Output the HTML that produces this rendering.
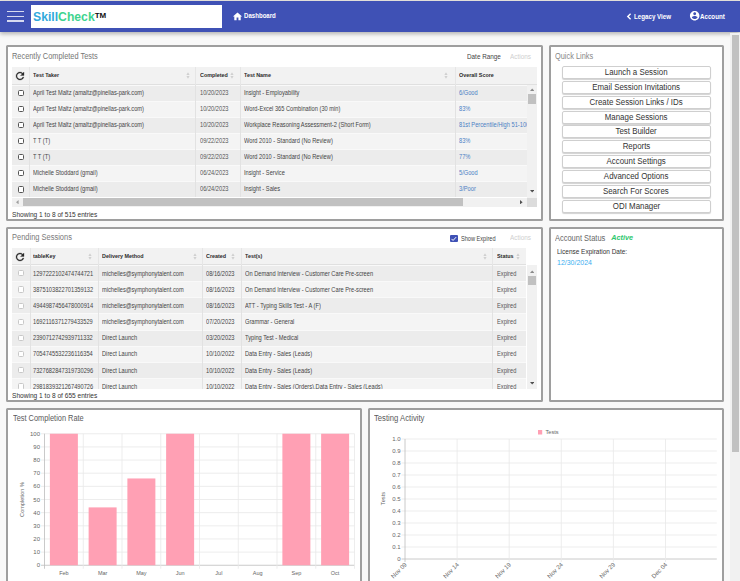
<!DOCTYPE html>
<html><head><meta charset="utf-8"><title>SkillCheck Dashboard</title>
<style>
*{box-sizing:border-box;margin:0;padding:0}
html,body{width:740px;height:581px;overflow:hidden;background:#f8f8f8;font-family:"Liberation Sans", sans-serif;}
.abs{position:absolute}
.t{position:absolute;white-space:nowrap;line-height:1;transform-origin:0 50%}
.panel{position:absolute;background:#fff;border:2px solid #9e9e9e;border-radius:1.5px}
.ql{position:absolute;left:561.5px;width:149.5px;height:13px;border:1px solid #cfcfcf;border-radius:2px;background:#fff;box-shadow:0 1px 1px rgba(0,0,0,.18);font-size:8.85px;color:#333;text-align:center;line-height:11px;white-space:nowrap}
</style></head><body>

<div class="abs" style="left:0;top:0;width:740px;height:1px;background:#e9e6e0"></div>
<div class="abs" style="left:0;top:1px;width:740px;height:30.5px;background:#3f51b5;box-shadow:0 2px 4px rgba(0,0,0,.28)"></div>
<div class="abs" style="left:7px;top:10.8px;width:17px;height:1.3px;background:#d6daf0"></div>
<div class="abs" style="left:7px;top:15.6px;width:17px;height:1.3px;background:#d6daf0"></div>
<div class="abs" style="left:7px;top:20.4px;width:17px;height:1.3px;background:#d6daf0"></div>
<div class="abs" style="left:30.5px;top:4.5px;width:191.5px;height:23.5px;background:#fff"></div>
<div class="t" style="left:33px;top:10.8px;font-size:12.2px;font-weight:bold;letter-spacing:0px"><span style="color:#31a9dc">Skill</span><span style="color:#3fd48f">Check</span><span style="color:#111;font-size:8px;position:relative;top:-3px">TM</span></div>
<svg class="abs" style="left:232.1px;top:10.5px" width="11" height="11" viewBox="0 0 24 24"><path fill="#fff" d="M10 20v-6h4v6h5v-8h3L12 3 2 12h3v8z"/></svg>
<div class="t" style="left:243.5px;top:13.23px;font-size:6.83px;transform:scaleX(0.8929);font-weight:bold;color:#fff">Dashboard</div>
<svg class="abs" style="left:626px;top:12.5px" width="6" height="7" viewBox="0 0 6 7"><path d="M4.6 0.8 L1.8 3.5 L4.6 6.2" stroke="#fff" stroke-width="1.4" fill="none"/></svg>
<div class="t" style="left:634.3px;top:13.83px;font-size:6.94px;transform:scaleX(0.8929);font-weight:bold;color:#fff">Legacy View</div>
<svg class="abs" style="left:689.3px;top:10.4px" width="11.4" height="11.4" viewBox="0 0 24 24"><path fill="#fff" d="M12 2C6.48 2 2 6.48 2 12s4.48 10 10 10 10-4.48 10-10S17.52 2 12 2zm0 3c1.66 0 3 1.34 3 3s-1.34 3-3 3-3-1.34-3-3 1.34-3 3-3zm0 14.2c-2.5 0-4.71-1.28-6-3.22.03-1.99 4-3.08 6-3.08 1.99 0 5.97 1.09 6 3.08-1.29 1.94-3.5 3.22-6 3.22z"/></svg>
<div class="t" style="left:700px;top:13.83px;font-size:6.94px;transform:scaleX(0.8929);font-weight:bold;color:#fff">Account</div>
<div class="abs" style="left:730px;top:33px;width:10px;height:548px;background:#f1f1f1"></div>
<div class="abs" style="left:731.5px;top:35px;width:7.5px;height:416.5px;background:#c1c1c1"></div>
<div class="panel" style="left:6px;top:45px;width:537px;height:176px"></div>
<div class="panel" style="left:549px;top:45px;width:175px;height:176px"></div>
<div class="panel" style="left:6px;top:227px;width:537px;height:175px"></div>
<div class="panel" style="left:549px;top:227px;width:175px;height:175px"></div>
<div class="panel" style="left:6px;top:408px;width:356px;height:192px"></div>
<div class="panel" style="left:368px;top:408px;width:356px;height:192px"></div>
<div class="t" style="left:12.3px;top:52.16px;font-size:8.29px;transform:scaleX(0.8929);color:#767676">Recently Completed Tests</div>
<div class="t" style="left:467.2px;top:54.02px;font-size:7.11px;transform:scaleX(0.8929);color:#444">Date Range</div>
<div class="t" style="left:509.8px;top:53.82px;font-size:7.17px;transform:scaleX(0.8929);color:#cfcfcf">Actions</div>
<div class="t" style="left:554.9px;top:52.16px;font-size:8.29px;transform:scaleX(0.8929);color:#888">Quick Links</div>
<div class="t" style="left:12.3px;top:233.15px;font-size:8.40px;transform:scaleX(0.8929);color:#7a7a7a">Pending Sessions</div>
<div class="t" style="left:554.7px;top:233.75px;font-size:8.38px;transform:scaleX(0.8929);color:#666">Account Status</div>
<div class="t" style="left:611.2px;top:233.7px;font-size:7.3px;font-weight:bold;font-style:italic;color:#2dc76d;transform:none">Active</div>
<div class="t" style="left:557.2px;top:247.61px;font-size:7.26px;transform:scaleX(0.8929);color:#333">License Expiration Date:</div>
<div class="t" style="left:557.2px;top:259.18px;font-size:7.84px;transform:scaleX(0.8929);color:#3aaef0">12/30/2024</div>
<div class="t" style="left:12.5px;top:414.16px;font-size:8.29px;transform:scaleX(0.8929);color:#5a5a5a">Test Completion Rate</div>
<div class="t" style="left:373.8px;top:413.74px;font-size:8.62px;transform:scaleX(0.8929);color:#5a5a5a">Testing Activity</div>
<div class="abs" style="left:450px;top:234.6px;width:7.5px;height:7.5px;background:#3f51b5;border-radius:1px"></div>
<svg class="abs" style="left:450px;top:234.6px" width="7.5" height="7.5" viewBox="0 0 10 10"><path d="M2 5.2 L4.1 7.3 L8.2 2.8" stroke="#fff" stroke-width="1.3" fill="none"/></svg>
<div class="t" style="left:460.8px;top:236.06px;font-size:6.27px;transform:scaleX(0.8929);color:#444">Show Expired</div>
<div class="t" style="left:509.8px;top:235.22px;font-size:7.17px;transform:scaleX(0.8929);color:#cfcfcf">Actions</div>
<div class="ql" style="top:65.80px"><span style="display:inline-block;transform:scaleX(0.893)">Launch a Session</span></div>
<div class="ql" style="top:80.70px"><span style="display:inline-block;transform:scaleX(0.893)">Email Session Invitations</span></div>
<div class="ql" style="top:95.60px"><span style="display:inline-block;transform:scaleX(0.893)">Create Session Links / IDs</span></div>
<div class="ql" style="top:110.50px"><span style="display:inline-block;transform:scaleX(0.893)">Manage Sessions</span></div>
<div class="ql" style="top:125.40px"><span style="display:inline-block;transform:scaleX(0.893)">Test Builder</span></div>
<div class="ql" style="top:140.30px"><span style="display:inline-block;transform:scaleX(0.893)">Reports</span></div>
<div class="ql" style="top:155.20px"><span style="display:inline-block;transform:scaleX(0.893)">Account Settings</span></div>
<div class="ql" style="top:170.10px"><span style="display:inline-block;transform:scaleX(0.893)">Advanced Options</span></div>
<div class="ql" style="top:185.00px"><span style="display:inline-block;transform:scaleX(0.893)">Search For Scores</span></div>
<div class="ql" style="top:199.90px"><span style="display:inline-block;transform:scaleX(0.893)">ODI Manager</span></div>
<div class="abs" style="left:12px;top:67px;width:525px;height:17.5px;background:#f2f2f2;border-bottom:1px solid #e0e0e0"></div>
<div class="abs" style="left:29px;top:67px;width:1px;height:17.5px;background:#e6e6e6"></div>
<div class="abs" style="left:195.3px;top:67px;width:1px;height:17.5px;background:#e6e6e6"></div>
<div class="abs" style="left:240px;top:67px;width:1px;height:17.5px;background:#e6e6e6"></div>
<div class="abs" style="left:454.5px;top:67px;width:1px;height:17.5px;background:#e6e6e6"></div>
<svg class="abs" style="left:14px;top:70.25px" width="12" height="12" viewBox="0 0 24 24"><path fill="#2a2a2a" stroke="#2a2a2a" stroke-width="0.6" d="M17.65 6.35A7.958 7.958 0 0 0 12 4c-4.42 0-7.99 3.58-7.99 8s3.57 8 7.99 8c3.73 0 6.84-2.55 7.73-6h-2.08A5.99 5.99 0 0 1 12 18c-3.31 0-6-2.69-6-6s2.69-6 6-6c1.66 0 3.14.69 4.22 1.78L13 11h7V4l-2.35 2.35z"/></svg>
<div class="t" style="left:33px;top:72.35px;font-size:6.1px;font-weight:bold;color:#2a2a2a;transform:scaleX(0.885)">Test Taker</div>
<div class="t" style="left:199.6px;top:72.35px;font-size:6.1px;font-weight:bold;color:#2a2a2a;transform:scaleX(0.885)">Completed</div>
<div class="t" style="left:244.2px;top:72.35px;font-size:6.1px;font-weight:bold;color:#2a2a2a;transform:scaleX(0.885)">Test Name</div>
<div class="t" style="left:458.6px;top:72.35px;font-size:6.1px;font-weight:bold;color:#2a2a2a;transform:scaleX(0.885)">Overall Score</div>
<svg class="abs" style="left:185.6px;top:72.25px" width="4" height="7" viewBox="0 0 4 7"><path d="M2 0.3 L3.6 2.9 L0.4 2.9Z M2 6.7 L3.6 4.1 L0.4 4.1Z" fill="#d0d0d0"/></svg>
<svg class="abs" style="left:230.2px;top:72.25px" width="4" height="7" viewBox="0 0 4 7"><path d="M2 0.3 L3.6 2.9 L0.4 2.9Z M2 6.7 L3.6 4.1 L0.4 4.1Z" fill="#d0d0d0"/></svg>
<svg class="abs" style="left:444.2px;top:72.25px" width="4" height="7" viewBox="0 0 4 7"><path d="M2 0.3 L3.6 2.9 L0.4 2.9Z M2 6.7 L3.6 4.1 L0.4 4.1Z" fill="#d0d0d0"/></svg>
<div class="abs" style="left:12px;top:84.5px;width:515px;height:113.0px;overflow:hidden">
<div class="abs" style="left:0;top:0.0px;width:515px;height:16.1px;background:#ececec;border-top:1px solid #f9f9f9"></div>
<div class="abs" style="left:17px;top:0.0px;width:1px;height:16.1px;background:#e2e2e2"></div>
<div class="abs" style="left:183.3px;top:0.0px;width:1px;height:16.1px;background:#e2e2e2"></div>
<div class="abs" style="left:228px;top:0.0px;width:1px;height:16.1px;background:#e2e2e2"></div>
<div class="abs" style="left:442.5px;top:0.0px;width:1px;height:16.1px;background:#e2e2e2"></div>
<div class="abs" style="left:6px;top:5.25px;width:6.2px;height:6.2px;border:1px solid #555;border-radius:1.5px;background:#fff"></div>
<div class="t" style="left:21.299999999999997px;top:5.21px;font-size:6.38px;transform:scaleX(0.8929);color:#444">April Test Maltz (amaltz@pinellas-park.com)</div>
<div class="t" style="left:187.8px;top:5.21px;font-size:6.38px;transform:scaleX(0.8929);color:#555">10/20/2023</div>
<div class="t" style="left:232.2px;top:5.21px;font-size:6.38px;transform:scaleX(0.8929);color:#444">Insight - Employability</div>
<div class="t" style="left:446.8px;top:5.21px;font-size:6.38px;transform:scaleX(0.8929);color:#4a7fc4">6/Good</div>
<div class="abs" style="left:0;top:16.1px;width:515px;height:16.1px;background:#f4f4f4;border-top:1px solid #f9f9f9"></div>
<div class="abs" style="left:17px;top:16.1px;width:1px;height:16.1px;background:#e2e2e2"></div>
<div class="abs" style="left:183.3px;top:16.1px;width:1px;height:16.1px;background:#e2e2e2"></div>
<div class="abs" style="left:228px;top:16.1px;width:1px;height:16.1px;background:#e2e2e2"></div>
<div class="abs" style="left:442.5px;top:16.1px;width:1px;height:16.1px;background:#e2e2e2"></div>
<div class="abs" style="left:6px;top:21.35px;width:6.2px;height:6.2px;border:1px solid #555;border-radius:1.5px;background:#fff"></div>
<div class="t" style="left:21.299999999999997px;top:21.31px;font-size:6.38px;transform:scaleX(0.8929);color:#444">April Test Maltz (amaltz@pinellas-park.com)</div>
<div class="t" style="left:187.8px;top:21.31px;font-size:6.38px;transform:scaleX(0.8929);color:#555">10/20/2023</div>
<div class="t" style="left:232.2px;top:21.31px;font-size:6.38px;transform:scaleX(0.8929);color:#444">Word-Excel 365 Combination (30 min)</div>
<div class="t" style="left:446.8px;top:21.31px;font-size:6.38px;transform:scaleX(0.8929);color:#4a7fc4">83%</div>
<div class="abs" style="left:0;top:32.2px;width:515px;height:16.1px;background:#ececec;border-top:1px solid #f9f9f9"></div>
<div class="abs" style="left:17px;top:32.2px;width:1px;height:16.1px;background:#e2e2e2"></div>
<div class="abs" style="left:183.3px;top:32.2px;width:1px;height:16.1px;background:#e2e2e2"></div>
<div class="abs" style="left:228px;top:32.2px;width:1px;height:16.1px;background:#e2e2e2"></div>
<div class="abs" style="left:442.5px;top:32.2px;width:1px;height:16.1px;background:#e2e2e2"></div>
<div class="abs" style="left:6px;top:37.45px;width:6.2px;height:6.2px;border:1px solid #555;border-radius:1.5px;background:#fff"></div>
<div class="t" style="left:21.299999999999997px;top:37.41px;font-size:6.38px;transform:scaleX(0.8929);color:#444">April Test Maltz (amaltz@pinellas-park.com)</div>
<div class="t" style="left:187.8px;top:37.41px;font-size:6.38px;transform:scaleX(0.8929);color:#555">10/20/2023</div>
<div class="t" style="left:232.2px;top:37.41px;font-size:6.38px;transform:scaleX(0.8929);color:#444">Workplace Reasoning Assessment-2 (Short Form)</div>
<div class="t" style="left:446.8px;top:37.41px;font-size:6.38px;transform:scaleX(0.8929);color:#4a7fc4">81st Percentile/High 51-100</div>
<div class="abs" style="left:0;top:48.300000000000004px;width:515px;height:16.1px;background:#f4f4f4;border-top:1px solid #f9f9f9"></div>
<div class="abs" style="left:17px;top:48.300000000000004px;width:1px;height:16.1px;background:#e2e2e2"></div>
<div class="abs" style="left:183.3px;top:48.300000000000004px;width:1px;height:16.1px;background:#e2e2e2"></div>
<div class="abs" style="left:228px;top:48.300000000000004px;width:1px;height:16.1px;background:#e2e2e2"></div>
<div class="abs" style="left:442.5px;top:48.300000000000004px;width:1px;height:16.1px;background:#e2e2e2"></div>
<div class="abs" style="left:6px;top:53.55px;width:6.2px;height:6.2px;border:1px solid #555;border-radius:1.5px;background:#fff"></div>
<div class="t" style="left:21.299999999999997px;top:53.51px;font-size:6.38px;transform:scaleX(0.8929);color:#444">T T (T)</div>
<div class="t" style="left:187.8px;top:53.51px;font-size:6.38px;transform:scaleX(0.8929);color:#555">09/22/2023</div>
<div class="t" style="left:232.2px;top:53.51px;font-size:6.38px;transform:scaleX(0.8929);color:#444">Word 2010 - Standard (No Review)</div>
<div class="t" style="left:446.8px;top:53.51px;font-size:6.38px;transform:scaleX(0.8929);color:#4a7fc4">83%</div>
<div class="abs" style="left:0;top:64.4px;width:515px;height:16.1px;background:#ececec;border-top:1px solid #f9f9f9"></div>
<div class="abs" style="left:17px;top:64.4px;width:1px;height:16.1px;background:#e2e2e2"></div>
<div class="abs" style="left:183.3px;top:64.4px;width:1px;height:16.1px;background:#e2e2e2"></div>
<div class="abs" style="left:228px;top:64.4px;width:1px;height:16.1px;background:#e2e2e2"></div>
<div class="abs" style="left:442.5px;top:64.4px;width:1px;height:16.1px;background:#e2e2e2"></div>
<div class="abs" style="left:6px;top:69.65px;width:6.2px;height:6.2px;border:1px solid #555;border-radius:1.5px;background:#fff"></div>
<div class="t" style="left:21.299999999999997px;top:69.61px;font-size:6.38px;transform:scaleX(0.8929);color:#444">T T (T)</div>
<div class="t" style="left:187.8px;top:69.61px;font-size:6.38px;transform:scaleX(0.8929);color:#555">09/22/2023</div>
<div class="t" style="left:232.2px;top:69.61px;font-size:6.38px;transform:scaleX(0.8929);color:#444">Word 2010 - Standard (No Review)</div>
<div class="t" style="left:446.8px;top:69.61px;font-size:6.38px;transform:scaleX(0.8929);color:#4a7fc4">77%</div>
<div class="abs" style="left:0;top:80.5px;width:515px;height:16.1px;background:#f4f4f4;border-top:1px solid #f9f9f9"></div>
<div class="abs" style="left:17px;top:80.5px;width:1px;height:16.1px;background:#e2e2e2"></div>
<div class="abs" style="left:183.3px;top:80.5px;width:1px;height:16.1px;background:#e2e2e2"></div>
<div class="abs" style="left:228px;top:80.5px;width:1px;height:16.1px;background:#e2e2e2"></div>
<div class="abs" style="left:442.5px;top:80.5px;width:1px;height:16.1px;background:#e2e2e2"></div>
<div class="abs" style="left:6px;top:85.75px;width:6.2px;height:6.2px;border:1px solid #555;border-radius:1.5px;background:#fff"></div>
<div class="t" style="left:21.299999999999997px;top:85.71px;font-size:6.38px;transform:scaleX(0.8929);color:#444">Michelle Stoddard (gmail)</div>
<div class="t" style="left:187.8px;top:85.71px;font-size:6.38px;transform:scaleX(0.8929);color:#555">06/24/2023</div>
<div class="t" style="left:232.2px;top:85.71px;font-size:6.38px;transform:scaleX(0.8929);color:#444">Insight - Service</div>
<div class="t" style="left:446.8px;top:85.71px;font-size:6.38px;transform:scaleX(0.8929);color:#4a7fc4">5/Good</div>
<div class="abs" style="left:0;top:96.60000000000001px;width:515px;height:16.1px;background:#ececec;border-top:1px solid #f9f9f9"></div>
<div class="abs" style="left:17px;top:96.60000000000001px;width:1px;height:16.1px;background:#e2e2e2"></div>
<div class="abs" style="left:183.3px;top:96.60000000000001px;width:1px;height:16.1px;background:#e2e2e2"></div>
<div class="abs" style="left:228px;top:96.60000000000001px;width:1px;height:16.1px;background:#e2e2e2"></div>
<div class="abs" style="left:442.5px;top:96.60000000000001px;width:1px;height:16.1px;background:#e2e2e2"></div>
<div class="abs" style="left:6px;top:101.85px;width:6.2px;height:6.2px;border:1px solid #555;border-radius:1.5px;background:#fff"></div>
<div class="t" style="left:21.299999999999997px;top:101.81px;font-size:6.38px;transform:scaleX(0.8929);color:#444">Michelle Stoddard (gmail)</div>
<div class="t" style="left:187.8px;top:101.81px;font-size:6.38px;transform:scaleX(0.8929);color:#555">06/24/2023</div>
<div class="t" style="left:232.2px;top:101.81px;font-size:6.38px;transform:scaleX(0.8929);color:#444">Insight - Sales</div>
<div class="t" style="left:446.8px;top:101.81px;font-size:6.38px;transform:scaleX(0.8929);color:#4a7fc4">3/Poor</div>
</div>
<div class="abs" style="left:527px;top:84.5px;width:10px;height:113px;background:#f1f1f1"></div>
<div class="abs" style="left:528px;top:94.4px;width:8px;height:9.6px;background:#c1c1c1"></div>
<svg class="abs" style="left:529.8px;top:88.0px" width="4.4" height="3" viewBox="0 0 4.4 3"><path d="M0 3 L2.2 0.5 L4.4 3Z" fill="#8a8a8a"/></svg>
<svg class="abs" style="left:529.8px;top:190.2px" width="4.4" height="3" viewBox="0 0 4.4 3"><path d="M0 0 L2.2 2.5 L4.4 0Z" fill="#505050"/></svg>
<div class="abs" style="left:12px;top:197.5px;width:515px;height:9.5px;background:#f1f1f1"></div>
<div class="abs" style="left:22.7px;top:198.4px;width:440.7px;height:7.6px;background:#c1c1c1"></div>
<div class="abs" style="left:527px;top:197.5px;width:10px;height:9.5px;background:#dcdcdc"></div>
<svg class="abs" style="left:15.7px;top:200.0px" width="3" height="4.4" viewBox="0 0 3 4.4"><path d="M2.6 0 L0 2.2 L2.6 4.4Z" fill="#a0a0a0"/></svg>
<svg class="abs" style="left:520.1px;top:200.0px" width="3" height="4.4" viewBox="0 0 3 4.4"><path d="M0 0 L2.6 2.2 L0 4.4Z" fill="#505050"/></svg>
<div class="t" style="left:12.1px;top:211.00px;font-size:7.39px;transform:scaleX(0.8929);color:#333">Showing 1 to 8 of 515 entries</div>
<div class="abs" style="left:12px;top:248.3px;width:513.7px;height:16.69999999999999px;background:#f2f2f2;border-bottom:1px solid #e0e0e0"></div>
<div class="abs" style="left:29.5px;top:248.3px;width:1px;height:16.69999999999999px;background:#e6e6e6"></div>
<div class="abs" style="left:97.6px;top:248.3px;width:1px;height:16.69999999999999px;background:#e6e6e6"></div>
<div class="abs" style="left:202.4px;top:248.3px;width:1px;height:16.69999999999999px;background:#e6e6e6"></div>
<div class="abs" style="left:241px;top:248.3px;width:1px;height:16.69999999999999px;background:#e6e6e6"></div>
<div class="abs" style="left:492px;top:248.3px;width:1px;height:16.69999999999999px;background:#e6e6e6"></div>
<svg class="abs" style="left:14px;top:251.14999999999998px" width="12" height="12" viewBox="0 0 24 24"><path fill="#2a2a2a" stroke="#2a2a2a" stroke-width="0.6" d="M17.65 6.35A7.958 7.958 0 0 0 12 4c-4.42 0-7.99 3.58-7.99 8s3.57 8 7.99 8c3.73 0 6.84-2.55 7.73-6h-2.08A5.99 5.99 0 0 1 12 18c-3.31 0-6-2.69-6-6s2.69-6 6-6c1.66 0 3.14.69 4.22 1.78L13 11h7V4l-2.35 2.35z"/></svg>
<div class="t" style="left:32.9px;top:253.25px;font-size:6.1px;font-weight:bold;color:#2a2a2a;transform:scaleX(0.885)">tableKey</div>
<div class="t" style="left:102.2px;top:253.25px;font-size:6.1px;font-weight:bold;color:#2a2a2a;transform:scaleX(0.885)">Delivery Method</div>
<div class="t" style="left:206.2px;top:253.25px;font-size:6.1px;font-weight:bold;color:#2a2a2a;transform:scaleX(0.885)">Created</div>
<div class="t" style="left:244.8px;top:253.25px;font-size:6.1px;font-weight:bold;color:#2a2a2a;transform:scaleX(0.885)">Test(s)</div>
<div class="t" style="left:497.1px;top:253.25px;font-size:6.1px;font-weight:bold;color:#2a2a2a;transform:scaleX(0.885)">Status</div>
<svg class="abs" style="left:87.7px;top:253.14999999999998px" width="4" height="7" viewBox="0 0 4 7"><path d="M2 0.3 L3.6 2.9 L0.4 2.9Z M2 6.7 L3.6 4.1 L0.4 4.1Z" fill="#d0d0d0"/></svg>
<svg class="abs" style="left:192.9px;top:253.14999999999998px" width="4" height="7" viewBox="0 0 4 7"><path d="M2 0.3 L3.6 2.9 L0.4 2.9Z M2 6.7 L3.6 4.1 L0.4 4.1Z" fill="#d0d0d0"/></svg>
<svg class="abs" style="left:230.7px;top:253.14999999999998px" width="4" height="7" viewBox="0 0 4 7"><path d="M2 0.3 L3.6 2.9 L0.4 2.9Z M2 6.7 L3.6 4.1 L0.4 4.1Z" fill="#d0d0d0"/></svg>
<svg class="abs" style="left:483.3px;top:253.14999999999998px" width="4" height="7" viewBox="0 0 4 7"><path d="M2 0.3 L3.6 2.9 L0.4 2.9Z M2 6.7 L3.6 4.1 L0.4 4.1Z" fill="#d0d0d0"/></svg>
<svg class="abs" style="left:516px;top:253.14999999999998px" width="4" height="7" viewBox="0 0 4 7"><path d="M2 0.3 L3.6 2.9 L0.4 2.9Z M2 6.7 L3.6 4.1 L0.4 4.1Z" fill="#d0d0d0"/></svg>
<div class="abs" style="left:12px;top:265px;width:513.7px;height:124px;overflow:hidden">
<div class="abs" style="left:0;top:0.0px;width:513.7px;height:16.15px;background:#ececec;border-top:1px solid #f9f9f9"></div>
<div class="abs" style="left:17.5px;top:0.0px;width:1px;height:16.15px;background:#e2e2e2"></div>
<div class="abs" style="left:85.6px;top:0.0px;width:1px;height:16.15px;background:#e2e2e2"></div>
<div class="abs" style="left:190.4px;top:0.0px;width:1px;height:16.15px;background:#e2e2e2"></div>
<div class="abs" style="left:229px;top:0.0px;width:1px;height:16.15px;background:#e2e2e2"></div>
<div class="abs" style="left:480px;top:0.0px;width:1px;height:16.15px;background:#e2e2e2"></div>
<div class="abs" style="left:6px;top:5.27px;width:6.2px;height:6.2px;border:1px solid #c8c8c8;border-radius:1.5px;background:#fff"></div>
<div class="t" style="left:21.299999999999997px;top:5.63px;font-size:6.38px;transform:scaleX(0.8929);color:#444">1297222102474744721</div>
<div class="t" style="left:90.2px;top:5.63px;font-size:6.38px;transform:scaleX(0.8929);color:#444">michelles@symphonytalent.com</div>
<div class="t" style="left:194.4px;top:5.63px;font-size:6.38px;transform:scaleX(0.8929);color:#444">08/16/2023</div>
<div class="t" style="left:232.8px;top:5.63px;font-size:6.38px;transform:scaleX(0.8929);color:#444">On Demand Interview - Customer Care Pre-screen</div>
<div class="t" style="left:485.1px;top:5.63px;font-size:6.38px;transform:scaleX(0.8929);color:#555">Expired</div>
<div class="abs" style="left:0;top:16.15px;width:513.7px;height:16.15px;background:#f4f4f4;border-top:1px solid #f9f9f9"></div>
<div class="abs" style="left:17.5px;top:16.15px;width:1px;height:16.15px;background:#e2e2e2"></div>
<div class="abs" style="left:85.6px;top:16.15px;width:1px;height:16.15px;background:#e2e2e2"></div>
<div class="abs" style="left:190.4px;top:16.15px;width:1px;height:16.15px;background:#e2e2e2"></div>
<div class="abs" style="left:229px;top:16.15px;width:1px;height:16.15px;background:#e2e2e2"></div>
<div class="abs" style="left:480px;top:16.15px;width:1px;height:16.15px;background:#e2e2e2"></div>
<div class="abs" style="left:6px;top:21.42px;width:6.2px;height:6.2px;border:1px solid #c8c8c8;border-radius:1.5px;background:#fff"></div>
<div class="t" style="left:21.299999999999997px;top:21.78px;font-size:6.38px;transform:scaleX(0.8929);color:#444">3875103822701359132</div>
<div class="t" style="left:90.2px;top:21.78px;font-size:6.38px;transform:scaleX(0.8929);color:#444">michelles@symphonytalent.com</div>
<div class="t" style="left:194.4px;top:21.78px;font-size:6.38px;transform:scaleX(0.8929);color:#444">08/16/2023</div>
<div class="t" style="left:232.8px;top:21.78px;font-size:6.38px;transform:scaleX(0.8929);color:#444">On Demand Interview - Customer Care Pre-screen</div>
<div class="t" style="left:485.1px;top:21.78px;font-size:6.38px;transform:scaleX(0.8929);color:#555">Expired</div>
<div class="abs" style="left:0;top:32.3px;width:513.7px;height:16.15px;background:#ececec;border-top:1px solid #f9f9f9"></div>
<div class="abs" style="left:17.5px;top:32.3px;width:1px;height:16.15px;background:#e2e2e2"></div>
<div class="abs" style="left:85.6px;top:32.3px;width:1px;height:16.15px;background:#e2e2e2"></div>
<div class="abs" style="left:190.4px;top:32.3px;width:1px;height:16.15px;background:#e2e2e2"></div>
<div class="abs" style="left:229px;top:32.3px;width:1px;height:16.15px;background:#e2e2e2"></div>
<div class="abs" style="left:480px;top:32.3px;width:1px;height:16.15px;background:#e2e2e2"></div>
<div class="abs" style="left:6px;top:37.58px;width:6.2px;height:6.2px;border:1px solid #c8c8c8;border-radius:1.5px;background:#fff"></div>
<div class="t" style="left:21.299999999999997px;top:37.93px;font-size:6.38px;transform:scaleX(0.8929);color:#444">4944987456478000914</div>
<div class="t" style="left:90.2px;top:37.93px;font-size:6.38px;transform:scaleX(0.8929);color:#444">michelles@symphonytalent.com</div>
<div class="t" style="left:194.4px;top:37.93px;font-size:6.38px;transform:scaleX(0.8929);color:#444">08/16/2023</div>
<div class="t" style="left:232.8px;top:37.93px;font-size:6.38px;transform:scaleX(0.8929);color:#444">ATT - Typing Skills Test - A (F)</div>
<div class="t" style="left:485.1px;top:37.93px;font-size:6.38px;transform:scaleX(0.8929);color:#555">Expired</div>
<div class="abs" style="left:0;top:48.449999999999996px;width:513.7px;height:16.15px;background:#f4f4f4;border-top:1px solid #f9f9f9"></div>
<div class="abs" style="left:17.5px;top:48.449999999999996px;width:1px;height:16.15px;background:#e2e2e2"></div>
<div class="abs" style="left:85.6px;top:48.449999999999996px;width:1px;height:16.15px;background:#e2e2e2"></div>
<div class="abs" style="left:190.4px;top:48.449999999999996px;width:1px;height:16.15px;background:#e2e2e2"></div>
<div class="abs" style="left:229px;top:48.449999999999996px;width:1px;height:16.15px;background:#e2e2e2"></div>
<div class="abs" style="left:480px;top:48.449999999999996px;width:1px;height:16.15px;background:#e2e2e2"></div>
<div class="abs" style="left:6px;top:53.72px;width:6.2px;height:6.2px;border:1px solid #c8c8c8;border-radius:1.5px;background:#fff"></div>
<div class="t" style="left:21.299999999999997px;top:54.08px;font-size:6.38px;transform:scaleX(0.8929);color:#444">1692116371279433529</div>
<div class="t" style="left:90.2px;top:54.08px;font-size:6.38px;transform:scaleX(0.8929);color:#444">michelles@symphonytalent.com</div>
<div class="t" style="left:194.4px;top:54.08px;font-size:6.38px;transform:scaleX(0.8929);color:#444">07/20/2023</div>
<div class="t" style="left:232.8px;top:54.08px;font-size:6.38px;transform:scaleX(0.8929);color:#444">Grammar - General</div>
<div class="t" style="left:485.1px;top:54.08px;font-size:6.38px;transform:scaleX(0.8929);color:#555">Expired</div>
<div class="abs" style="left:0;top:64.6px;width:513.7px;height:16.15px;background:#ececec;border-top:1px solid #f9f9f9"></div>
<div class="abs" style="left:17.5px;top:64.6px;width:1px;height:16.15px;background:#e2e2e2"></div>
<div class="abs" style="left:85.6px;top:64.6px;width:1px;height:16.15px;background:#e2e2e2"></div>
<div class="abs" style="left:190.4px;top:64.6px;width:1px;height:16.15px;background:#e2e2e2"></div>
<div class="abs" style="left:229px;top:64.6px;width:1px;height:16.15px;background:#e2e2e2"></div>
<div class="abs" style="left:480px;top:64.6px;width:1px;height:16.15px;background:#e2e2e2"></div>
<div class="abs" style="left:6px;top:69.88px;width:6.2px;height:6.2px;border:1px solid #c8c8c8;border-radius:1.5px;background:#fff"></div>
<div class="t" style="left:21.299999999999997px;top:70.23px;font-size:6.38px;transform:scaleX(0.8929);color:#444">2390712742939711332</div>
<div class="t" style="left:90.2px;top:70.23px;font-size:6.38px;transform:scaleX(0.8929);color:#444">Direct Launch</div>
<div class="t" style="left:194.4px;top:70.23px;font-size:6.38px;transform:scaleX(0.8929);color:#444">03/20/2023</div>
<div class="t" style="left:232.8px;top:70.23px;font-size:6.38px;transform:scaleX(0.8929);color:#444">Typing Test - Medical</div>
<div class="t" style="left:485.1px;top:70.23px;font-size:6.38px;transform:scaleX(0.8929);color:#555">Expired</div>
<div class="abs" style="left:0;top:80.75px;width:513.7px;height:16.15px;background:#f4f4f4;border-top:1px solid #f9f9f9"></div>
<div class="abs" style="left:17.5px;top:80.75px;width:1px;height:16.15px;background:#e2e2e2"></div>
<div class="abs" style="left:85.6px;top:80.75px;width:1px;height:16.15px;background:#e2e2e2"></div>
<div class="abs" style="left:190.4px;top:80.75px;width:1px;height:16.15px;background:#e2e2e2"></div>
<div class="abs" style="left:229px;top:80.75px;width:1px;height:16.15px;background:#e2e2e2"></div>
<div class="abs" style="left:480px;top:80.75px;width:1px;height:16.15px;background:#e2e2e2"></div>
<div class="abs" style="left:6px;top:86.03px;width:6.2px;height:6.2px;border:1px solid #c8c8c8;border-radius:1.5px;background:#fff"></div>
<div class="t" style="left:21.299999999999997px;top:86.38px;font-size:6.38px;transform:scaleX(0.8929);color:#444">7054745532236116354</div>
<div class="t" style="left:90.2px;top:86.38px;font-size:6.38px;transform:scaleX(0.8929);color:#444">Direct Launch</div>
<div class="t" style="left:194.4px;top:86.38px;font-size:6.38px;transform:scaleX(0.8929);color:#444">10/10/2022</div>
<div class="t" style="left:232.8px;top:86.38px;font-size:6.38px;transform:scaleX(0.8929);color:#444">Data Entry - Sales (Leads)</div>
<div class="t" style="left:485.1px;top:86.38px;font-size:6.38px;transform:scaleX(0.8929);color:#555">Expired</div>
<div class="abs" style="left:0;top:96.89999999999999px;width:513.7px;height:16.15px;background:#ececec;border-top:1px solid #f9f9f9"></div>
<div class="abs" style="left:17.5px;top:96.89999999999999px;width:1px;height:16.15px;background:#e2e2e2"></div>
<div class="abs" style="left:85.6px;top:96.89999999999999px;width:1px;height:16.15px;background:#e2e2e2"></div>
<div class="abs" style="left:190.4px;top:96.89999999999999px;width:1px;height:16.15px;background:#e2e2e2"></div>
<div class="abs" style="left:229px;top:96.89999999999999px;width:1px;height:16.15px;background:#e2e2e2"></div>
<div class="abs" style="left:480px;top:96.89999999999999px;width:1px;height:16.15px;background:#e2e2e2"></div>
<div class="abs" style="left:6px;top:102.17px;width:6.2px;height:6.2px;border:1px solid #c8c8c8;border-radius:1.5px;background:#fff"></div>
<div class="t" style="left:21.299999999999997px;top:102.53px;font-size:6.38px;transform:scaleX(0.8929);color:#444">7327682847319730296</div>
<div class="t" style="left:90.2px;top:102.53px;font-size:6.38px;transform:scaleX(0.8929);color:#444">Direct Launch</div>
<div class="t" style="left:194.4px;top:102.53px;font-size:6.38px;transform:scaleX(0.8929);color:#444">10/10/2022</div>
<div class="t" style="left:232.8px;top:102.53px;font-size:6.38px;transform:scaleX(0.8929);color:#444">Data Entry - Sales (Leads)</div>
<div class="t" style="left:485.1px;top:102.53px;font-size:6.38px;transform:scaleX(0.8929);color:#555">Expired</div>
<div class="abs" style="left:0;top:113.04999999999998px;width:513.7px;height:16.15px;background:#f4f4f4;border-top:1px solid #f9f9f9"></div>
<div class="abs" style="left:17.5px;top:113.04999999999998px;width:1px;height:16.15px;background:#e2e2e2"></div>
<div class="abs" style="left:85.6px;top:113.04999999999998px;width:1px;height:16.15px;background:#e2e2e2"></div>
<div class="abs" style="left:190.4px;top:113.04999999999998px;width:1px;height:16.15px;background:#e2e2e2"></div>
<div class="abs" style="left:229px;top:113.04999999999998px;width:1px;height:16.15px;background:#e2e2e2"></div>
<div class="abs" style="left:480px;top:113.04999999999998px;width:1px;height:16.15px;background:#e2e2e2"></div>
<div class="abs" style="left:6px;top:118.32px;width:6.2px;height:6.2px;border:1px solid #c8c8c8;border-radius:1.5px;background:#fff"></div>
<div class="t" style="left:21.299999999999997px;top:118.68px;font-size:6.38px;transform:scaleX(0.8929);color:#444">2981839321267490726</div>
<div class="t" style="left:90.2px;top:118.68px;font-size:6.38px;transform:scaleX(0.8929);color:#444">Direct Launch</div>
<div class="t" style="left:194.4px;top:118.68px;font-size:6.38px;transform:scaleX(0.8929);color:#444">10/10/2022</div>
<div class="t" style="left:232.8px;top:118.68px;font-size:6.38px;transform:scaleX(0.8929);color:#444">Data Entry - Sales (Orders),Data Entry - Sales (Leads)</div>
<div class="t" style="left:485.1px;top:118.68px;font-size:6.38px;transform:scaleX(0.8929);color:#555">Expired</div>
</div>
<div class="abs" style="left:527px;top:265px;width:9.7px;height:124px;background:#f1f1f1"></div>
<div class="abs" style="left:528px;top:276px;width:7.6px;height:9.3px;background:#c1c1c1"></div>
<svg class="abs" style="left:529.8px;top:269.7px" width="4.4" height="3" viewBox="0 0 4.4 3"><path d="M0 3 L2.2 0.5 L4.4 3Z" fill="#8a8a8a"/></svg>
<svg class="abs" style="left:529.8px;top:381.5px" width="4.4" height="3" viewBox="0 0 4.4 3"><path d="M0 0 L2.2 2.5 L4.4 0Z" fill="#505050"/></svg>
<div class="t" style="left:12.1px;top:392.40px;font-size:7.39px;transform:scaleX(0.8929);color:#333">Showing 1 to 8 of 655 entries</div>
<svg class="abs" style="left:0;top:0" width="740" height="581" viewBox="0 0 740 581" font-family="Liberation Sans, sans-serif">
<line x1="41.0" y1="565.25" x2="354.5" y2="565.25" stroke="#bdbdbd" stroke-width="0.8"/>
<text x="40" y="567.25" font-size="6" fill="#666" text-anchor="end">0</text>
<line x1="41.0" y1="552.10" x2="354.5" y2="552.10" stroke="#e8e8e8" stroke-width="0.8"/>
<text x="40" y="554.10" font-size="6" fill="#666" text-anchor="end">10</text>
<line x1="41.0" y1="538.95" x2="354.5" y2="538.95" stroke="#e8e8e8" stroke-width="0.8"/>
<text x="40" y="540.95" font-size="6" fill="#666" text-anchor="end">20</text>
<line x1="41.0" y1="525.80" x2="354.5" y2="525.80" stroke="#e8e8e8" stroke-width="0.8"/>
<text x="40" y="527.80" font-size="6" fill="#666" text-anchor="end">30</text>
<line x1="41.0" y1="512.65" x2="354.5" y2="512.65" stroke="#e8e8e8" stroke-width="0.8"/>
<text x="40" y="514.65" font-size="6" fill="#666" text-anchor="end">40</text>
<line x1="41.0" y1="499.50" x2="354.5" y2="499.50" stroke="#e8e8e8" stroke-width="0.8"/>
<text x="40" y="501.50" font-size="6" fill="#666" text-anchor="end">50</text>
<line x1="41.0" y1="486.35" x2="354.5" y2="486.35" stroke="#e8e8e8" stroke-width="0.8"/>
<text x="40" y="488.35" font-size="6" fill="#666" text-anchor="end">60</text>
<line x1="41.0" y1="473.20" x2="354.5" y2="473.20" stroke="#e8e8e8" stroke-width="0.8"/>
<text x="40" y="475.20" font-size="6" fill="#666" text-anchor="end">70</text>
<line x1="41.0" y1="460.05" x2="354.5" y2="460.05" stroke="#e8e8e8" stroke-width="0.8"/>
<text x="40" y="462.05" font-size="6" fill="#666" text-anchor="end">80</text>
<line x1="41.0" y1="446.90" x2="354.5" y2="446.90" stroke="#e8e8e8" stroke-width="0.8"/>
<text x="40" y="448.90" font-size="6" fill="#666" text-anchor="end">90</text>
<line x1="41.0" y1="433.75" x2="354.5" y2="433.75" stroke="#e8e8e8" stroke-width="0.8"/>
<text x="40" y="435.75" font-size="6" fill="#666" text-anchor="end">100</text>
<line x1="44.50" y1="433.75" x2="44.50" y2="568.75" stroke="#bdbdbd" stroke-width="0.8"/>
<line x1="83.25" y1="433.75" x2="83.25" y2="568.75" stroke="#e8e8e8" stroke-width="0.8"/>
<line x1="122.00" y1="433.75" x2="122.00" y2="568.75" stroke="#e8e8e8" stroke-width="0.8"/>
<line x1="160.75" y1="433.75" x2="160.75" y2="568.75" stroke="#e8e8e8" stroke-width="0.8"/>
<line x1="199.50" y1="433.75" x2="199.50" y2="568.75" stroke="#e8e8e8" stroke-width="0.8"/>
<line x1="238.25" y1="433.75" x2="238.25" y2="568.75" stroke="#e8e8e8" stroke-width="0.8"/>
<line x1="277.00" y1="433.75" x2="277.00" y2="568.75" stroke="#e8e8e8" stroke-width="0.8"/>
<line x1="315.75" y1="433.75" x2="315.75" y2="568.75" stroke="#e8e8e8" stroke-width="0.8"/>
<line x1="354.50" y1="433.75" x2="354.50" y2="568.75" stroke="#e8e8e8" stroke-width="0.8"/>
<rect x="49.88" y="433.75" width="28" height="131.50" fill="#ffa0b4"/>
<text x="63.88" y="575" font-size="5.5" fill="#666" text-anchor="middle">Feb</text>
<rect x="88.62" y="507.39" width="28" height="57.86" fill="#ffa0b4"/>
<text x="102.62" y="575" font-size="5.5" fill="#666" text-anchor="middle">Mar</text>
<rect x="127.38" y="478.46" width="28" height="86.79" fill="#ffa0b4"/>
<text x="141.38" y="575" font-size="5.5" fill="#666" text-anchor="middle">May</text>
<rect x="166.12" y="433.75" width="28" height="131.50" fill="#ffa0b4"/>
<text x="180.12" y="575" font-size="5.5" fill="#666" text-anchor="middle">Jun</text>
<text x="218.88" y="575" font-size="5.5" fill="#666" text-anchor="middle">Jul</text>
<text x="257.62" y="575" font-size="5.5" fill="#666" text-anchor="middle">Aug</text>
<rect x="282.38" y="433.75" width="28" height="131.50" fill="#ffa0b4"/>
<text x="296.38" y="575" font-size="5.5" fill="#666" text-anchor="middle">Sep</text>
<rect x="321.12" y="433.75" width="28" height="131.50" fill="#ffa0b4"/>
<text x="335.12" y="575" font-size="5.5" fill="#666" text-anchor="middle">Oct</text>
<text x="0" y="0" font-size="5.6" fill="#666" text-anchor="middle" transform="translate(24.2 499.5) rotate(-90)">Completion %</text>
<line x1="401.5" y1="559" x2="716.8" y2="559" stroke="#bdbdbd" stroke-width="0.8"/>
<text x="400.5" y="561.00" font-size="6" fill="#666" text-anchor="end">0</text>
<line x1="401.5" y1="547" x2="716.8" y2="547" stroke="#e8e8e8" stroke-width="0.8"/>
<text x="400.5" y="549.00" font-size="6" fill="#666" text-anchor="end">0.1</text>
<line x1="401.5" y1="535" x2="716.8" y2="535" stroke="#e8e8e8" stroke-width="0.8"/>
<text x="400.5" y="537.00" font-size="6" fill="#666" text-anchor="end">0.2</text>
<line x1="401.5" y1="523" x2="716.8" y2="523" stroke="#e8e8e8" stroke-width="0.8"/>
<text x="400.5" y="525.00" font-size="6" fill="#666" text-anchor="end">0.3</text>
<line x1="401.5" y1="511" x2="716.8" y2="511" stroke="#e8e8e8" stroke-width="0.8"/>
<text x="400.5" y="513.00" font-size="6" fill="#666" text-anchor="end">0.4</text>
<line x1="401.5" y1="499" x2="716.8" y2="499" stroke="#e8e8e8" stroke-width="0.8"/>
<text x="400.5" y="501.00" font-size="6" fill="#666" text-anchor="end">0.5</text>
<line x1="401.5" y1="487" x2="716.8" y2="487" stroke="#e8e8e8" stroke-width="0.8"/>
<text x="400.5" y="489.00" font-size="6" fill="#666" text-anchor="end">0.6</text>
<line x1="401.5" y1="475" x2="716.8" y2="475" stroke="#e8e8e8" stroke-width="0.8"/>
<text x="400.5" y="477.00" font-size="6" fill="#666" text-anchor="end">0.7</text>
<line x1="401.5" y1="463" x2="716.8" y2="463" stroke="#e8e8e8" stroke-width="0.8"/>
<text x="400.5" y="465.00" font-size="6" fill="#666" text-anchor="end">0.8</text>
<line x1="401.5" y1="451" x2="716.8" y2="451" stroke="#e8e8e8" stroke-width="0.8"/>
<text x="400.5" y="453.00" font-size="6" fill="#666" text-anchor="end">0.9</text>
<line x1="401.5" y1="439" x2="716.8" y2="439" stroke="#e8e8e8" stroke-width="0.8"/>
<text x="400.5" y="441.00" font-size="6" fill="#666" text-anchor="end">1.0</text>
<line x1="405.00" y1="439" x2="405.00" y2="562" stroke="#bdbdbd" stroke-width="0.8"/>
<text x="0" y="0" font-size="6.1" fill="#666" text-anchor="end" transform="translate(407.20 565) rotate(-45)">Nov 09</text>
<line x1="457.10" y1="439" x2="457.10" y2="562" stroke="#e8e8e8" stroke-width="0.8"/>
<text x="0" y="0" font-size="6.1" fill="#666" text-anchor="end" transform="translate(459.30 565) rotate(-45)">Nov 14</text>
<line x1="509.20" y1="439" x2="509.20" y2="562" stroke="#e8e8e8" stroke-width="0.8"/>
<text x="0" y="0" font-size="6.1" fill="#666" text-anchor="end" transform="translate(511.40 565) rotate(-45)">Nov 19</text>
<line x1="561.30" y1="439" x2="561.30" y2="562" stroke="#e8e8e8" stroke-width="0.8"/>
<text x="0" y="0" font-size="6.1" fill="#666" text-anchor="end" transform="translate(563.50 565) rotate(-45)">Nov 24</text>
<line x1="613.40" y1="439" x2="613.40" y2="562" stroke="#e8e8e8" stroke-width="0.8"/>
<text x="0" y="0" font-size="6.1" fill="#666" text-anchor="end" transform="translate(615.60 565) rotate(-45)">Nov 29</text>
<line x1="665.50" y1="439" x2="665.50" y2="562" stroke="#e8e8e8" stroke-width="0.8"/>
<text x="0" y="0" font-size="6.1" fill="#666" text-anchor="end" transform="translate(667.70 565) rotate(-45)">Dec 04</text>
<text x="0" y="0" font-size="5.7" fill="#666" text-anchor="middle" transform="translate(385 498.5) rotate(-90)">Tests</text>
<rect x="538" y="430" width="4.2" height="4.5" fill="#ffa0b4"/>
<text x="545.5" y="433.5" font-size="5.6" fill="#666">Tests</text>
</svg>
</body></html>
